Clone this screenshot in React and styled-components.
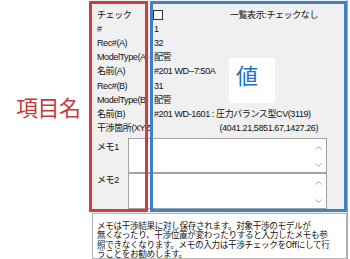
import React from "react";
import styled, { createGlobalStyle } from "styled-components";

const GlobalStyle = createGlobalStyle`
  html, body {
    margin: 0;
    padding: 0;
    background: #ffffff;
  }
  body {
    font-family: "Liberation Sans", "Noto Sans CJK JP", sans-serif;
  }
`;

const Page = styled.div`
  position: relative;
  width: 350px;
  height: 259px;
  display: flex;
  overflow: hidden;
  background: #ffffff;
`;

const LeftSide = styled.div`
  width: 92px;
  flex: none;
  box-sizing: border-box;
  padding: 95px 0 0 16px;
`;

const Caption = styled.div`
  font-family: "Noto Sans CJK JP", sans-serif;
  font-size: 22px;
  line-height: 22px;
  color: #c83a3b;
  letter-spacing: -0.5px;
  white-space: nowrap;
`;

const Panel = styled.div`
  width: 256px;
  flex: none;
  box-sizing: border-box;
  background: #f0f0f0;
  border-right: 1px solid #a8a8a8;
  display: flex;
  flex-direction: column;
`;

const Form = styled.div`
  padding: 8px 29px 0 5px;
  font-size: 9px;
  letter-spacing: -0.4px;
  color: #111;
`;

const Row = styled.div`
  display: grid;
  grid-template-columns: 57px 1fr;
  height: 14.1px;
  line-height: 14px;
  align-items: center;
  white-space: nowrap;
`;

const Label = styled.div`
  overflow: ${(p) => (p.$wide ? "visible" : "hidden")};
`;

const Value = styled.div`
  display: flex;
  align-items: center;
  justify-content: ${(p) => (p.$right ? "flex-end" : "flex-start")};
  gap: 4px;
`;

const Check = styled.span`
  width: 8px;
  height: 8px;
  margin-left: -1px;
  border: 1px solid #333;
  background: #fff;
`;

const Spacer = styled.span`
  flex: 1;
`;

const MemoRow = styled.div`
  display: grid;
  grid-template-columns: 31px 199px;
  height: ${(p) => p.$h}px;
  margin-top: ${(p) => p.$top || 0}px;
`;

const MemoLabel = styled.div`
  padding-top: ${(p) => p.$pad}px;
  line-height: 14px;
`;

const MemoBox = styled.div`
  box-sizing: border-box;
  border: 1px solid #a3a3a3;
  background: #ffffff;
  display: flex;
  justify-content: flex-end;
`;

const ScrollCol = styled.div`
  width: 16px;
  display: flex;
  flex-direction: column;
  justify-content: space-between;
  align-items: center;
  padding: 7px 0 5px;
  box-sizing: border-box;
`;

const Note = styled.div`
  margin-top: 4px;
  flex: 1;
  box-sizing: border-box;
  border: 1px solid #b4b4b4;
  background: #ffffff;
  padding: 7px 4px 0 4px;
  font-family: "Noto Sans CJK JP", sans-serif;
  font-size: 8.6px;
  line-height: 9.4px;
  letter-spacing: -0.35px;
  color: #111;
`;

const NoteLine = styled.div`
  white-space: nowrap;
  height: 9.4px;
`;

const Frame = styled.div`
  position: absolute;
  box-sizing: border-box;
  left: ${(p) => p.$x}px;
  top: ${(p) => p.$y}px;
  width: ${(p) => p.$w}px;
  height: ${(p) => p.$h}px;
  border: 3px solid ${(p) => p.$color};
  pointer-events: none;
`;

const ValueTag = styled.div`
  position: absolute;
  left: 229px;
  top: 58px;
  width: 46px;
  height: 45px;
  box-sizing: border-box;
  background: #ffffff;
  padding: 5px 0 0 7px;
  font-family: "Noto Sans CJK JP", sans-serif;
  font-size: 22px;
  line-height: 22px;
  color: #1b72c8;
`;

const Chevron = ({ up }) => (
  <svg width="7" height="4" viewBox="0 0 7 4">
    <polyline
      points={up ? "0.5,3.5 3.5,0.5 6.5,3.5" : "0.5,0.5 3.5,3.5 6.5,0.5"}
      fill="none"
      stroke="#a9a9a9"
      strokeWidth="1"
    />
  </svg>
);

const Memo = () => (
  <MemoBox>
    <ScrollCol>
      <Chevron up />
      <Chevron />
    </ScrollCol>
  </MemoBox>
);

const rows = [
  ["#", "1"],
  ["Rec#(A)", "32"],
  ["ModelType(A)", "配管"],
  ["名前(A)", "#201 WD--7:50A"],
  ["Rec#(B)", "31"],
  ["ModelType(B)", "配管"],
  ["名前(B)", "#201 WD-1601 : 圧力バランス型CV(3119)"],
];

export default function App() {
  return (
    <Page>
      <GlobalStyle />
      <LeftSide>
        <Caption>項目名</Caption>
      </LeftSide>
      <Panel>
        <Form>
          <Row>
            <Label>チェック</Label>
            <Value>
              <Check />
              <Spacer />
              <span>一覧表示:チェックなし</span>
            </Value>
          </Row>
          {rows.map(([k, v]) => (
            <Row key={k}>
              <Label>{k}</Label>
              <Value>{v}</Value>
            </Row>
          ))}
          <Row>
            <Label $wide>干渉箇所(XYZ)</Label>
            <Value $right>(4041.21,5851.67,1427.26)</Value>
          </Row>
          <MemoRow $h={35} $top={3}>
            <MemoLabel $pad={2}>メモ1</MemoLabel>
            <Memo />
          </MemoRow>
          <MemoRow $h={36}>
            <MemoLabel $pad={0}>メモ2</MemoLabel>
            <Memo />
          </MemoRow>
        </Form>
        <Note>
          <NoteLine>メモは干渉結果に対し保存されます。対象干渉のモデルが</NoteLine>
          <NoteLine>無くなったり、干渉位置が変わったりすると入力したメモも参</NoteLine>
          <NoteLine>照できなくなります。メモの入力は干渉チェックをOffにして行</NoteLine>
          <NoteLine>うことをお勧めします。</NoteLine>
        </Note>
      </Panel>
      <Frame $x={89} $y={1} $w={59} $h={211} $color="#d03b3c" />
      <Frame $x={150} $y={1} $w={197} $h={211} $color="#3f80c6" />
      <ValueTag>値</ValueTag>
    </Page>
  );
}
